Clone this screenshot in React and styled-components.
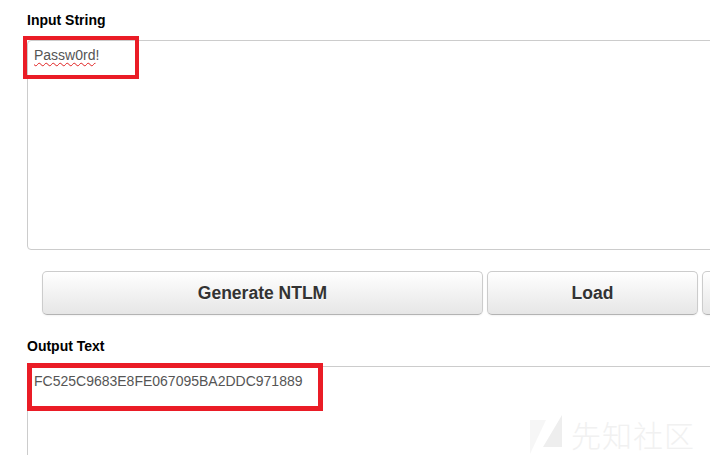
import React from "react";
import styled, { createGlobalStyle } from "styled-components";

const GlobalStyle = createGlobalStyle`
  html, body {
    margin: 0;
    padding: 0;
    background: #fff;
    overflow: hidden;
  }
  body {
    font-family: "Liberation Sans", Arial, sans-serif;
  }
`;

const Page = styled.div`
  position: relative;
  width: 710px;
  height: 455px;
  overflow: hidden;
  padding: 12px 0 0 27px;
  box-sizing: border-box;
`;

const Field = styled.section`
  position: relative;
  display: flex;
  flex-direction: column;
  width: 760px;
  margin-top: ${(p) => p.top || 0}px;
`;

const Label = styled.label`
  font-size: 14px;
  line-height: 16px;
  font-weight: bold;
  color: #000;
  margin-bottom: 12px;
`;

const TextBox = styled.div`
  height: 210px;
  box-sizing: border-box;
  border: 1px solid #ccc;
  border-radius: 4px;
  padding: 4px 6px;
  font-size: 14px;
  line-height: 20px;
  color: #555;
  background: #fff;
`;

const Misspelled = styled.span`
  text-decoration: underline wavy #e02020;
  text-decoration-thickness: 1px;
  text-underline-offset: 2px;
`;

const Highlight = styled.div`
  position: absolute;
  left: ${(p) => p.x}px;
  top: ${(p) => p.y}px;
  width: ${(p) => p.w}px;
  height: ${(p) => p.h}px;
  box-sizing: border-box;
  border: ${(p) => p.t}px solid #ea1c26;
  pointer-events: none;
`;

const ButtonRow = styled.div`
  display: flex;
  gap: 4px;
  margin: 21px 0 0 15px;
  width: 760px;
`;

const Button = styled.button`
  flex: none;
  width: ${(p) => p.w}px;
  height: 44px;
  box-sizing: border-box;
  padding: 0;
  border: 1px solid #ccc;
  border-bottom-color: #b3b3b3;
  border-radius: 5px;
  background: linear-gradient(to bottom, #ffffff, #e6e6e6);
  box-shadow: inset 0 1px 0 rgba(255, 255, 255, 0.2), 0 1px 2px rgba(0, 0, 0, 0.05);
  font-family: "Liberation Sans", Arial, sans-serif;
  font-size: 17.5px;
  font-weight: bold;
  color: #333;
  text-shadow: 0 1px 1px rgba(255, 255, 255, 0.75);
  cursor: pointer;
`;

const Watermark = styled.div`
  position: absolute;
  left: 530px;
  top: 412px;
  display: flex;
  align-items: center;
  gap: 8px;
  pointer-events: none;
`;

const WatermarkText = styled.span`
  font-family: "Noto Sans CJK SC", sans-serif;
  font-size: 30px;
  font-weight: 300;
  letter-spacing: 1px;
  color: #f1f1f1;
`;

const Logo = () => (
  <svg width="33" height="40" viewBox="0 0 33 40">
    <polygon points="0,6 16,6 0,40" fill="#f6f6f6" />
    <polygon points="32,1 32,33 13,33" fill="#eeeeee" />
  </svg>
);

export default function App() {
  return (
    <>
      <GlobalStyle />
      <Page>
        <Field>
          <Label>Input String</Label>
          <TextBox>
            <Misspelled>Passw0rd</Misspelled>!
          </TextBox>
          <Highlight x={-4} y={24} w={116} h={43} t={4} />
        </Field>

        <ButtonRow>
          <Button w={441}>Generate NTLM</Button>
          <Button w={211}>Load</Button>
          <Button w={200} aria-label="Save" />
        </ButtonRow>

        <Field top={23}>
          <Label>Output Text</Label>
          <TextBox>FC525C9683E8FE067095BA2DDC971889</TextBox>
          <Highlight x={0} y={25} w={296} h={48} t={5} />
        </Field>

        <Watermark>
          <Logo />
          <WatermarkText>先知社区</WatermarkText>
        </Watermark>
      </Page>
    </>
  );
}
